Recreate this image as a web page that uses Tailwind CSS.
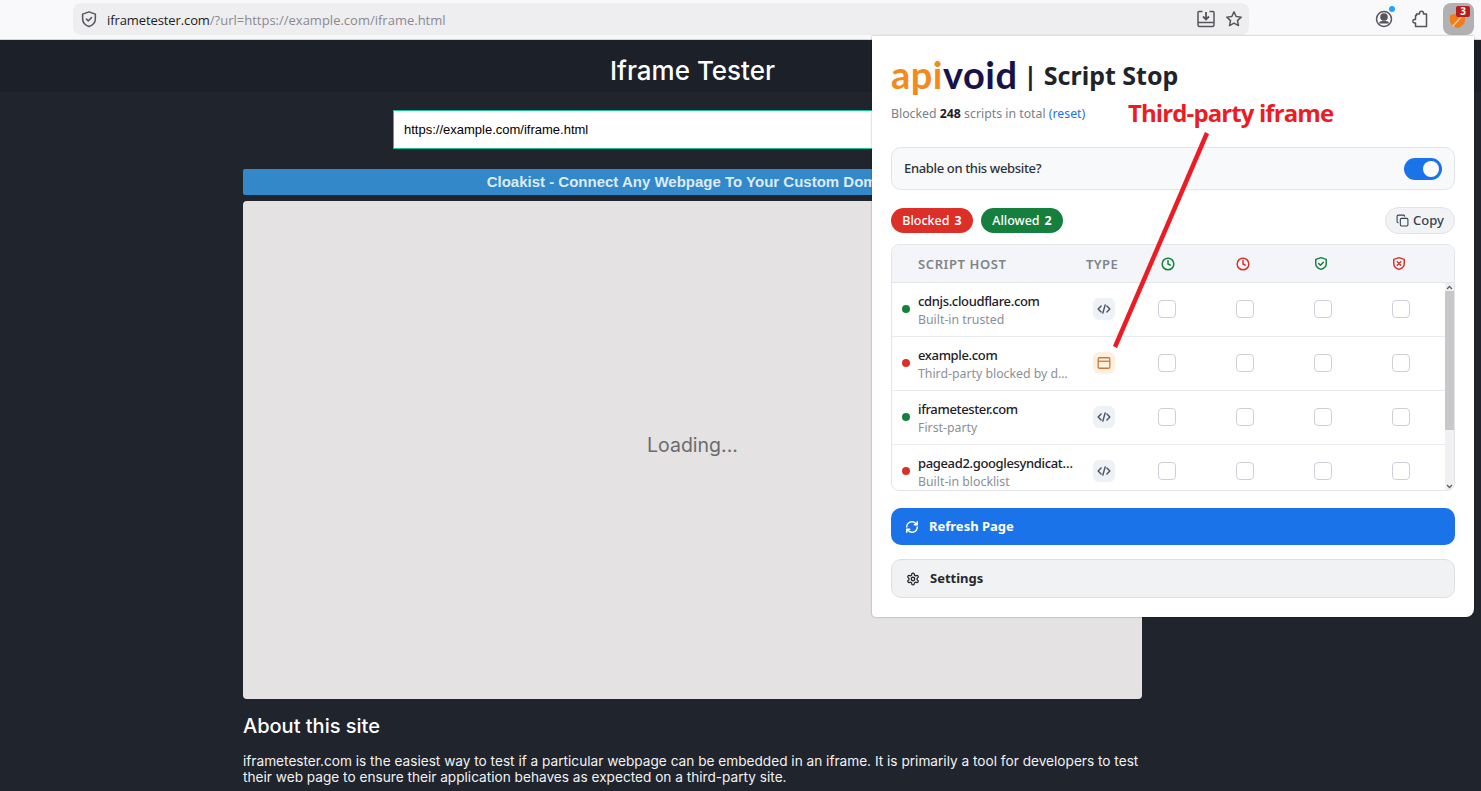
<!DOCTYPE html>
<html lang="en">
<head>
    <meta charset="UTF-8">
    <title>Iframe Tester</title>
    <script src="https://cdn.jsdelivr.net/npm/@tailwindcss/browser@4"></script>
</head>
<body class="relative w-[1481px] h-[791px] overflow-hidden bg-[#20242d] font-['Noto_Sans',sans-serif]">

    <!-- Browser toolbar -->
    <div class="h-[40px] flex items-center pb-px bg-[#f9f9fb] border-b border-[#d4d4d8]">
        <div class="ml-[73px] w-[1176px] h-[32px] rounded-lg bg-[#eeeef0] flex items-center">
            <svg class="ml-[7px] w-[18px] h-[18px] text-[#55555b]" viewBox="0 0 24 24" fill="none" stroke="currentColor" stroke-width="2" stroke-linejoin="round" stroke-linecap="round"><path d="M12 2.500l8.500 3v6c0 5-3.400 8.600-8.500 10.500C6.900 20.100 3.500 16.500 3.500 11.500v-6z"/><path d="M8.500 12l2.500 2.500 4.500-4.500"/></svg>
            <div class="ml-[9px] mt-[3px] text-[13px] text-[#8a8a90] font-['Open_Sans',sans-serif]"><span class="text-[#1c1c22] tracking-[-0.1px]">iframetester.com</span>/?url=https://example.com/iframe.html</div>
            <div class="ml-auto mr-[6px] flex items-center gap-[10px] text-[#55555b]">
                <svg class="w-[18px] h-[18px]" viewBox="0 0 18 18" fill="none" stroke="currentColor" stroke-width="1.500"><path d="M5.500 1.500H2a1 1 0 0 0-1 1V15a1.500 1.500 0 0 0 1.500 1.500h13A1.500 1.500 0 0 0 17 15V2.500a1 1 0 0 0-1-1h-3.500"/><path d="M1 12.500h16"/><path d="M9 2v7M6 6.500l3 3 3-3" stroke-width="1.800"/></svg>
                <svg class="w-[18px] h-[18px]" viewBox="0 0 24 24" fill="none" stroke="currentColor" stroke-width="2" stroke-linejoin="round"><path d="M12 2.500l2.900 6.200 6.700.8-5 4.600 1.400 6.700-6-3.400-6 3.400 1.400-6.700-5-4.600 6.700-.8z"/></svg>
            </div>
        </div>
        <div class="relative ml-[126px] w-[18px] h-[18px] text-[#55555b]">
            <svg class="w-[18px] h-[18px]" viewBox="0 0 18 18" fill="none" stroke="currentColor" stroke-width="1.500"><circle cx="9" cy="9" r="7.500"/><circle cx="9" cy="7" r="3" fill="currentColor"/><path d="M3.500 13.500c1-2 3-2.700 5.500-2.700s4.500.7 5.500 2.700" fill="currentColor" stroke="none"/></svg>
            <span class="absolute right-[-2px] top-[-4px] w-[6px] h-[6px] rounded-full bg-[#1ea7fd]"></span>
        </div>
        <svg class="ml-[17px] w-[18px] h-[18px] text-[#55555b]" viewBox="0 0 18 18" fill="none" stroke="currentColor" stroke-width="1.500" stroke-linejoin="round"><path d="M6.500 5.500V4h3v-.8a2 2 0 0 1 4 0V4h3v12.500H5.500v-3.500H4.200a1.800 1.800 0 0 1 0-3.500h1.300V5.500z"/></svg>
        <div class="relative ml-[15px] w-[31px] h-[32px] rounded-lg bg-[#b1b1b3] flex items-center justify-center">
            <svg class="w-[17px] h-[17px] mt-[3px] mr-[2px]" viewBox="0 0 18 18"><path d="M1 3.500l8-2 8 2v5c0 4-3.500 7-8 8.500C4.500 15.500 1 12.500 1 8.500z" fill="#ef7d1a"/><path d="M4 15L14 4" stroke="#f9c4a0" stroke-width="1.500"/></svg>
            <span class="absolute left-[13px] top-[3px] w-[14px] h-[11px] bg-[#b91c1c] rounded-[2px] text-white text-[10px] leading-[11px] font-bold text-center">3</span>
        </div>
    </div>

    <!-- Iframe Tester page -->
    <div class="h-[52px] bg-[#1c2028] w-full">
        <h1 class="w-[1385px] text-center text-white text-[26px] leading-[62px] font-medium font-['Inter',sans-serif]">Iframe Tester</h1>
    </div>
    <div class="ml-[243px] w-[899px]">
        <div class="mt-[18px] ml-[150px] w-[600px] h-[39px] bg-white border border-[#19c39a] flex items-center pl-[10px] text-[13px] text-black font-['Liberation_Sans',sans-serif]">https://example.com/iframe.html</div>
        <div class="mt-[20px] h-[26px] rounded-[2px] bg-[#3388c9] text-center text-[#dcebf6] text-[15px] leading-[26px] font-bold font-['Liberation_Sans',sans-serif]">Cloakist - Connect Any Webpage To Your Custom Domain</div>
        <div class="mt-[6px] h-[498px] rounded-[4px] bg-[#e4e2e3] flex items-center justify-center pb-[8px] text-[19.500px] text-[#6c6c6e] font-['Inter',sans-serif]">Loading...</div>
        <h2 class="mt-[15px] text-white text-[20px] leading-[24px] font-medium font-['Inter',sans-serif]">About this site</h2>
        <p class="mt-[15px] text-[#f2f2f2] text-[13.650px] leading-[16px] font-['Inter',sans-serif]">iframetester.com is the easiest way to test if a particular webpage can be embedded in an iframe. It is primarily a tool for developers to test their web page to ensure their application behaves as expected on a third-party site.</p>
    </div>

    <!-- Extension popup -->
    <div class="absolute left-[872px] top-[36px] w-[602px] h-[581px] bg-white rounded-br-lg rounded-bl-sm px-[19px] pt-[15px] shadow-[0_0_2px_rgba(0,0,0,0.4)]">
        <div class="flex items-center h-[46px]">
            <span class="text-[38px] leading-[46px] font-bold font-['Lato',sans-serif] tracking-[0.5px]"><span class="text-[#f28a1e]">api</span><span class="text-[#17134a]">void</span></span>
            <span class="ml-[6px] mt-[4px] text-[25px] font-bold text-[#20242a]">| Script Stop</span>
        </div>
        <div class="mt-[6px] h-[22px] leading-[22px] text-[12.300px] text-[#7b7f86]">Blocked <b class="text-[#1d2025] font-bold">248</b> scripts in total <span class="text-[#1a73e8]">(reset)</span></div>
        <div class="mt-[22px] h-[43px] rounded-[10px] border border-[#e2e5ea] bg-[#f8f9fb] flex items-center justify-between pl-[12px] pr-[12px]">
            <span class="text-[13px] tracking-[-0.35px] font-medium text-[#2e323a]">Enable on this website?</span>
            <div class="w-[38px] h-[22px] rounded-full bg-[#1a73e8] flex items-center justify-end pr-[3px]"><span class="w-[16px] h-[16px] rounded-full bg-white"></span></div>
        </div>

        <div class="mt-[17px] h-[27px] flex items-center gap-[8px]">
            <span class="w-[82px] h-[25px] pt-px rounded-full bg-[#dc2f27] text-white text-[12.500px] font-medium flex items-center justify-center gap-[5px]">Blocked <b class="font-bold">3</b></span>
            <span class="w-[82px] h-[25px] pt-px rounded-full bg-[#15803d] text-white text-[12.500px] font-medium flex items-center justify-center gap-[5px]">Allowed <b class="font-bold">2</b></span>
            <span class="ml-auto w-[70px] h-[27px] rounded-full bg-[#f1f3f5] border border-[#dfe2e7] text-[#374151] text-[13px] font-medium flex items-center justify-center gap-[4px]">
                <svg class="w-[13px] h-[13px]" viewBox="0 0 24 24" fill="none" stroke="currentColor" stroke-width="2" stroke-linecap="round" stroke-linejoin="round"><rect x="8" y="8" width="14" height="14" rx="2"/><path d="M4 16c-1.100 0-2-.9-2-2V4c0-1.100.9-2 2-2h10c1.100 0 2 .9 2 2"/></svg>
                Copy
            </span>
        </div>

        <!-- Scripts table -->
        <div class="mt-[10px] h-[247px] rounded-[8px] border border-[#e2e5ea] overflow-hidden">
            <div class="h-[38px] bg-[#f3f5f9] border-b border-[#e2e5ea] grid grid-cols-[26px_156px_56px_76px_74px_82px_74px] items-center">
                <span></span>
                <span class="pt-[2px] whitespace-nowrap text-[13px] font-semibold tracking-[0.6px] text-[#7f848c]">SCRIPT HOST</span>
                <span class="pt-[2px] text-center text-[13px] font-semibold tracking-[0.4px] text-[#7f848c]">TYPE</span>
                <svg class="mx-auto w-[14px] h-[14px] text-[#15803d]" viewBox="0 0 24 24" fill="none" stroke="currentColor" stroke-width="2.500" stroke-linecap="round" stroke-linejoin="round"><circle cx="12" cy="12" r="10"/><path d="M12 6v6l4 2"/></svg>
                <svg class="mx-auto w-[14px] h-[14px] text-[#dc2f27]" viewBox="0 0 24 24" fill="none" stroke="currentColor" stroke-width="2.500" stroke-linecap="round" stroke-linejoin="round"><circle cx="12" cy="12" r="10"/><path d="M12 6v6l4 2"/></svg>
                <svg class="mx-auto w-[14px] h-[15px] text-[#15803d]" viewBox="0 0 24 24" fill="none" stroke="currentColor" stroke-width="2.500" stroke-linecap="round" stroke-linejoin="round"><path d="M12 2l9 3v7c0 5-3.800 8.500-9 10-5.200-1.500-9-5-9-10V5z"/><path d="M8 12l3 3 5-5"/></svg>
                <svg class="mx-auto w-[14px] h-[15px] text-[#dc2f27]" viewBox="0 0 24 24" fill="none" stroke="currentColor" stroke-width="2.500" stroke-linecap="round" stroke-linejoin="round"><path d="M12 2l9 3v7c0 5-3.800 8.500-9 10-5.200-1.500-9-5-9-10V5z"/><path d="M9 9l6 6M15 9l-6 6"/></svg>
            </div>
            <div class="relative h-[208px] overflow-hidden pr-[9px]">

                <div class="h-[54px] border-b border-[#e9ebef] grid grid-cols-[26px_162px_48px_78px_78px_78px_78px] items-center">
                    <span class="ml-[10px] mb-px w-[8px] h-[8px] rounded-full bg-[#15803d]"></span>
                    <div class="min-w-0 pr-[4px] pt-[2px]">
                        <div class="truncate text-[13px] leading-[18px] tracking-[-0.35px] font-medium text-[#1d2025]">cdnjs.cloudflare.com</div>
                        <div class="truncate text-[12.300px] leading-[19px] text-[#8b8f96]">Built-in trusted</div>
                    </div>
                    <div class="mx-auto mb-px w-[22px] h-[22px] rounded-[6px] bg-[#eef1f6] flex items-center justify-center text-[#4b5563]"><svg class="w-[14px] h-[14px]" viewBox="0 0 24 24" fill="none" stroke="currentColor" stroke-width="2.500" stroke-linecap="round" stroke-linejoin="round"><path d="M7 7l-5 5 5 5M17 7l5 5-5 5M14 5l-4 14"/></svg></div>
                    <span class="mx-auto mb-px w-[18px] h-[18px] rounded-[4px] border border-[#cdd0d8] bg-white"></span>
                    <span class="mx-auto mb-px w-[18px] h-[18px] rounded-[4px] border border-[#cdd0d8] bg-white"></span>
                    <span class="mx-auto mb-px w-[18px] h-[18px] rounded-[4px] border border-[#cdd0d8] bg-white"></span>
                    <span class="mx-auto mb-px w-[18px] h-[18px] rounded-[4px] border border-[#cdd0d8] bg-white"></span>
                </div>

                <div class="h-[54px] border-b border-[#e9ebef] grid grid-cols-[26px_162px_48px_78px_78px_78px_78px] items-center">
                    <span class="ml-[10px] mb-px w-[8px] h-[8px] rounded-full bg-[#dc2f27]"></span>
                    <div class="min-w-0 pr-[4px] pt-[2px]">
                        <div class="truncate text-[13px] leading-[18px] tracking-[-0.35px] font-medium text-[#1d2025]">example.com</div>
                        <div class="truncate pr-[3px] text-[12.300px] leading-[19px] text-[#8b8f96]">Third-party blocked by default</div>
                    </div>
                    <div class="mx-auto mb-px w-[22px] h-[22px] rounded-[6px] bg-[#fdf0e0] flex items-center justify-center text-[#c47a3a]"><svg class="w-[14px] h-[14px]" viewBox="0 0 24 24" fill="none" stroke="currentColor" stroke-width="2.200" stroke-linejoin="round"><rect x="2" y="3" width="20" height="18" rx="2"/><path d="M2 9h20"/></svg></div>
                    <span class="mx-auto mb-px w-[18px] h-[18px] rounded-[4px] border border-[#cdd0d8] bg-white"></span>
                    <span class="mx-auto mb-px w-[18px] h-[18px] rounded-[4px] border border-[#cdd0d8] bg-white"></span>
                    <span class="mx-auto mb-px w-[18px] h-[18px] rounded-[4px] border border-[#cdd0d8] bg-white"></span>
                    <span class="mx-auto mb-px w-[18px] h-[18px] rounded-[4px] border border-[#cdd0d8] bg-white"></span>
                </div>

                <div class="h-[54px] border-b border-[#e9ebef] grid grid-cols-[26px_162px_48px_78px_78px_78px_78px] items-center">
                    <span class="ml-[10px] mb-px w-[8px] h-[8px] rounded-full bg-[#15803d]"></span>
                    <div class="min-w-0 pr-[4px] pt-[2px]">
                        <div class="truncate text-[13px] leading-[18px] tracking-[-0.35px] font-medium text-[#1d2025]">iframetester.com</div>
                        <div class="truncate text-[12.300px] leading-[19px] text-[#8b8f96]">First-party</div>
                    </div>
                    <div class="mx-auto mb-px w-[22px] h-[22px] rounded-[6px] bg-[#eef1f6] flex items-center justify-center text-[#4b5563]"><svg class="w-[14px] h-[14px]" viewBox="0 0 24 24" fill="none" stroke="currentColor" stroke-width="2.500" stroke-linecap="round" stroke-linejoin="round"><path d="M7 7l-5 5 5 5M17 7l5 5-5 5M14 5l-4 14"/></svg></div>
                    <span class="mx-auto mb-px w-[18px] h-[18px] rounded-[4px] border border-[#cdd0d8] bg-white"></span>
                    <span class="mx-auto mb-px w-[18px] h-[18px] rounded-[4px] border border-[#cdd0d8] bg-white"></span>
                    <span class="mx-auto mb-px w-[18px] h-[18px] rounded-[4px] border border-[#cdd0d8] bg-white"></span>
                    <span class="mx-auto mb-px w-[18px] h-[18px] rounded-[4px] border border-[#cdd0d8] bg-white"></span>
                </div>

                <div class="h-[54px] border-b border-[#e9ebef] grid grid-cols-[26px_162px_48px_78px_78px_78px_78px] items-center">
                    <span class="ml-[10px] mb-px w-[8px] h-[8px] rounded-full bg-[#dc2f27]"></span>
                    <div class="min-w-0 pr-[4px] pt-[2px]">
                        <div class="truncate text-[13px] leading-[18px] tracking-[-0.35px] font-medium text-[#1d2025]">pagead2.googlesyndication.com</div>
                        <div class="truncate text-[12.300px] leading-[19px] text-[#8b8f96]">Built-in blocklist</div>
                    </div>
                    <div class="mx-auto mb-px w-[22px] h-[22px] rounded-[6px] bg-[#eef1f6] flex items-center justify-center text-[#4b5563]"><svg class="w-[14px] h-[14px]" viewBox="0 0 24 24" fill="none" stroke="currentColor" stroke-width="2.500" stroke-linecap="round" stroke-linejoin="round"><path d="M7 7l-5 5 5 5M17 7l5 5-5 5M14 5l-4 14"/></svg></div>
                    <span class="mx-auto mb-px w-[18px] h-[18px] rounded-[4px] border border-[#cdd0d8] bg-white"></span>
                    <span class="mx-auto mb-px w-[18px] h-[18px] rounded-[4px] border border-[#cdd0d8] bg-white"></span>
                    <span class="mx-auto mb-px w-[18px] h-[18px] rounded-[4px] border border-[#cdd0d8] bg-white"></span>
                    <span class="mx-auto mb-px w-[18px] h-[18px] rounded-[4px] border border-[#cdd0d8] bg-white"></span>
                </div>

                <!-- scrollbar -->
                <div class="absolute right-0 top-0 bottom-0 w-[9px] bg-[#f0f0f0]">
                    <svg class="absolute left-[1px] top-[2px] w-[7px] h-[5px] text-[#606060]" viewBox="0 0 7 5" fill="none" stroke="currentColor" stroke-width="1.300"><path d="M1 4l2.500-2.500L6 4"/></svg>
                    <div class="absolute left-0 right-0 top-[8px] h-[139px] bg-[#c8c8c8]"></div>
                    <svg class="absolute left-[1px] bottom-[2px] w-[7px] h-[5px] text-[#606060]" viewBox="0 0 7 5" fill="none" stroke="currentColor" stroke-width="1.300"><path d="M1 1l2.500 2.500L6 1"/></svg>
                </div>
            </div>
        </div>

        <div class="mt-[17px] h-[37px] rounded-[10px] bg-[#1a73e8] text-white text-[13px] font-bold flex items-center pl-[14px] gap-[10px]">
            <svg class="w-[14px] h-[14px]" viewBox="0 0 24 24" fill="none" stroke="currentColor" stroke-width="2.500" stroke-linecap="round" stroke-linejoin="round"><path d="M3 12a9 9 0 0 1 15.500-6.200L21 8M21 3v5h-5M21 12a9 9 0 0 1-15.500 6.200L3 16M3 21v-5h5"/></svg>
            <span class="pt-px">Refresh Page</span>
        </div>
        <div class="mt-[14px] h-[39px] rounded-[10px] bg-[#f1f2f4] border border-[#dcdfe4] text-[#25282d] text-[13px] font-bold flex items-center pl-[14px] gap-[10px]">
            <svg class="w-[14px] h-[14px]" viewBox="0 0 24 24" fill="none" stroke="currentColor" stroke-width="2.200" stroke-linecap="round" stroke-linejoin="round"><path d="M12.220 2h-.44a2 2 0 0 0-2 2v.18a2 2 0 0 1-1 1.730l-.43.25a2 2 0 0 1-2 0l-.15-.08a2 2 0 0 0-2.730.73l-.22.38a2 2 0 0 0 .73 2.730l.15.1a2 2 0 0 1 1 1.720v.51a2 2 0 0 1-1 1.740l-.15.09a2 2 0 0 0-.73 2.730l.22.38a2 2 0 0 0 2.730.73l.15-.08a2 2 0 0 1 2 0l.43.25a2 2 0 0 1 1 1.730V20a2 2 0 0 0 2 2h.44a2 2 0 0 0 2-2v-.18a2 2 0 0 1 1-1.730l.43-.25a2 2 0 0 1 2 0l.15.08a2 2 0 0 0 2.730-.73l.22-.39a2 2 0 0 0-.73-2.730l-.15-.08a2 2 0 0 1-1-1.740v-.5a2 2 0 0 1 1-1.740l.15-.09a2 2 0 0 0 .73-2.730l-.22-.38a2 2 0 0 0-2.730-.73l-.15.08a2 2 0 0 1-2 0l-.43-.25a2 2 0 0 1-1-1.730V4a2 2 0 0 0-2-2z"/><circle cx="12" cy="12" r="3"/></svg>
            <span class="pt-px">Settings</span>
        </div>
    </div>

    <!-- Red annotation -->
    <div class="absolute left-[1128px] top-[97px] text-[24px] leading-[32px] font-bold text-[#ed1c24] whitespace-nowrap font-['Open_Sans',sans-serif] tracking-[-0.9px]">Third-party iframe</div>
    <svg class="absolute left-[1100px] top-[125px] w-[120px] h-[230px]" viewBox="0 0 120 230"><path d="M107 8L15 222" stroke="#ed1c24" stroke-width="4.500"/></svg>
</body>
</html>
